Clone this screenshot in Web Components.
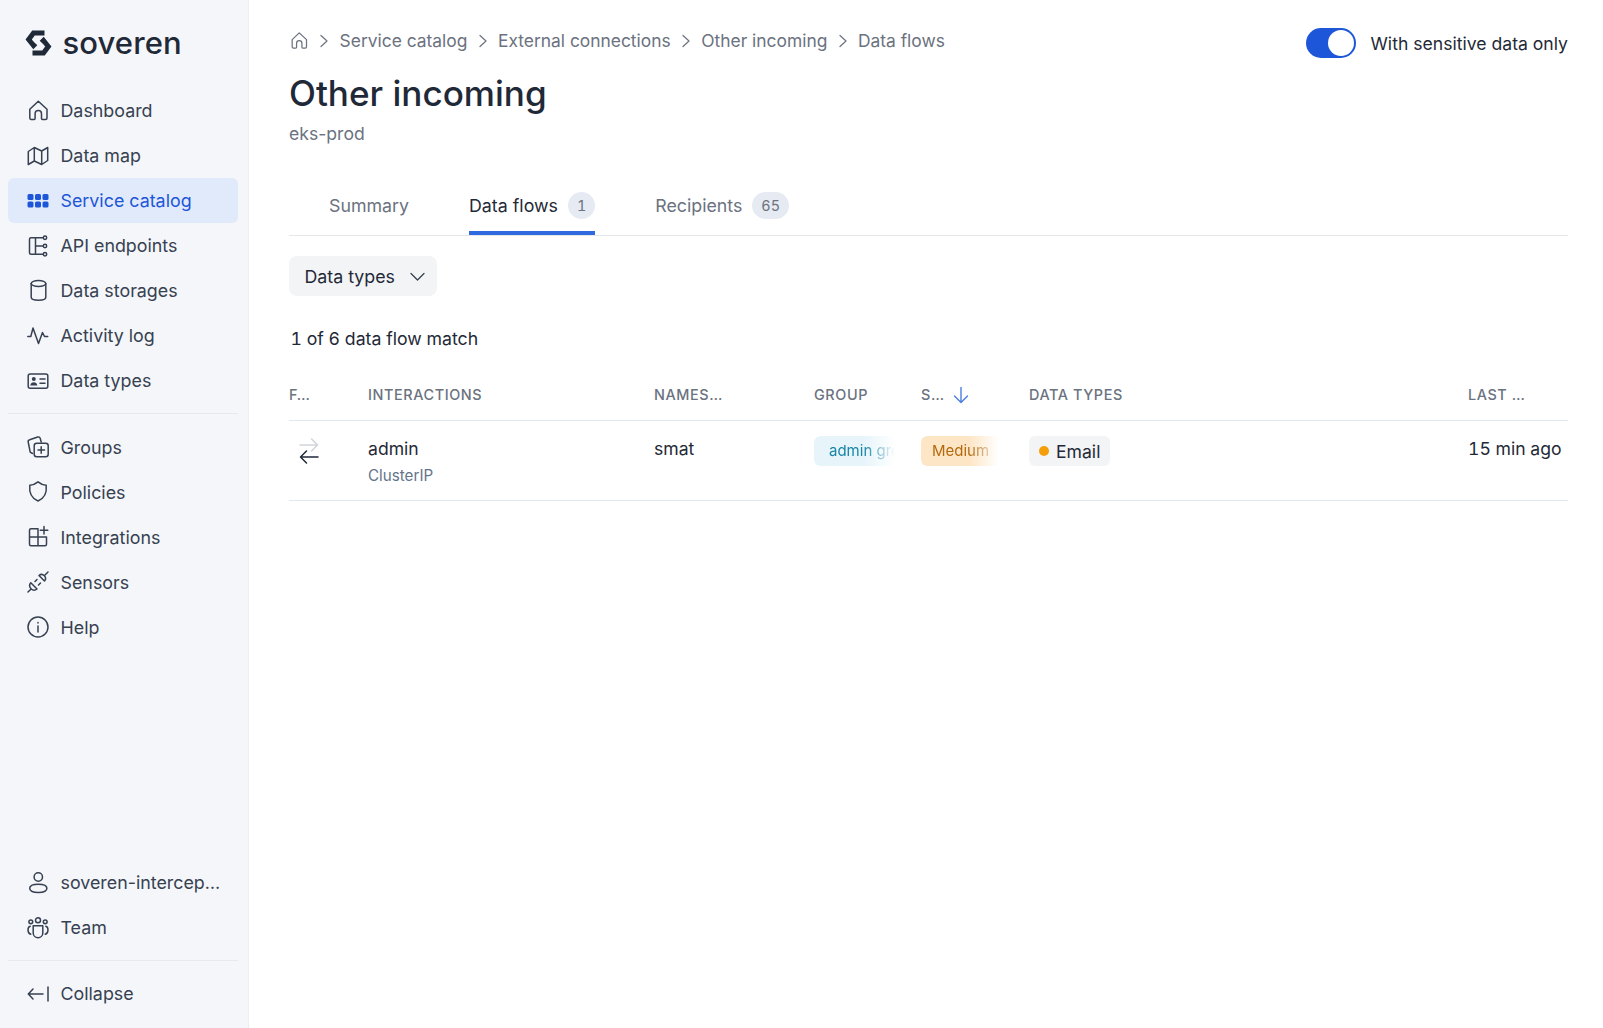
<!DOCTYPE html>
<html lang="en">
<head>
<meta charset="utf-8">
<title>Other incoming</title>
<style>
html,body{margin:0;height:100%;background:#fff;font-family:Inter,"Liberation Sans",sans-serif;color:#1f2937;overflow:hidden}
</style>
</head>
<body>
<app-shell>
  <side-nav slot="nav"></side-nav>
  <page-head>
    <bread-crumbs slot="crumbs"></bread-crumbs>
    <sens-toggle slot="action">With sensitive data only</sens-toggle>
  </page-head>
  <tab-bar></tab-bar>
  <filter-button>Data types</filter-button>
  <flow-table></flow-table>
</app-shell>
<script>
const ICONS={
 home:'<path d="M3.800 19V10.300L12.300 2.200l8.700 8.100V19a1.500 1.500 0 0 1-1.500 1.500h-3a1 1 0 0 1-1-1V14.800a3.200 3.200 0 0 0-6.400 0v4.700a1 1 0 0 1-1 1h-3A1.500 1.500 0 0 1 3.800 19z"/>',
 map:'<path d="M2.300 7.500 8.300 3.500l7.400 3.500 6-3.500v13l-6 4-7.400-3.500-6 3.500zM8.300 3.500v13.500M15.700 7v13.500"/>',
 grid:'<g fill="currentColor" stroke="none"><rect x="1.500" y="5" width="6" height="6" rx="1.500"/><rect x="9" y="5" width="6" height="6" rx="1.500"/><rect x="16.500" y="5" width="6" height="6" rx="1.500"/><rect x="1.500" y="12.500" width="6" height="6" rx="1.500"/><rect x="9" y="12.500" width="6" height="6" rx="1.500"/><rect x="16.500" y="12.500" width="6" height="6" rx="1.500"/></g>',
 api:'<path d="M17 3.800H5A1.500 1.500 0 0 0 3.500 5.300v13.400A1.500 1.500 0 0 0 5 20.200h12M9.500 3.800v16.400M9.500 12h7.500" /><circle cx="19" cy="3.800" r="1.700"/><circle cx="19" cy="12" r="1.700"/><circle cx="19" cy="20.200" r="1.700"/>',
 db:'<ellipse cx="12.500" cy="4.500" rx="7.300" ry="3"/><path d="M5.200 4.500v13.800c0 1.700 3.300 3 7.300 3s7.300-1.300 7.300-3V4.500"/>',
 act:'<path d="M1.800 12.500h3L7 4l5.500 15.500 4-11 2 4h3.200"/>',
 card:'<rect x="2.200" y="5" width="19.600" height="14.300" rx="2"/><circle cx="7.800" cy="10" r="2" fill="currentColor" stroke="none"/><path d="M4.300 16.500c.3-2.200 1.700-3.200 3.500-3.200s3.200 1 3.500 3.200z" fill="currentColor" stroke="none"/><path d="M14 10h5M14 14.300h5"/>',
 groups:'<rect x="8.200" y="8.200" width="14" height="13.500" rx="2.500"/><path d="M15.200 11.700v6.500M12 15h6.500M6.500 18.500 4.200 17.200 2.200 7a2 2 0 0 1 1.500-2.300l8-2.700a2 2 0 0 1 2.500 1.400l1 3.600"/>',
 shield:'<path d="M12 1.900c2.500 2.100 5.200 3.200 8.200 3.300.8 7.500-1.600 13.200-8.200 15.800C5.400 18.400 3 12.700 3.800 5.200c3-.1 5.700-1.200 8.200-3.300z"/>',
 integ:'<path d="M12 3.800H5a1.500 1.500 0 0 0-1.500 1.500v13.900A1.500 1.500 0 0 0 5 20.700h14a1.500 1.500 0 0 0 1.500-1.500V12H3.500M12 3.800v16.900M18 1.500v7.500M14.200 5.200h7.600"/>',
 plug:'<path d="M4.800 12.800 11 19a4.400 4.400 0 0 1-6.200-6.200zM2 22l2.800-2.800M9 11.500l2-2M12.500 15l2-2M13 5.500 18.500 11a3.900 3.900 0 0 0-5.500-5.500zM18.800 5.200 22 2"/>',
 info:'<circle cx="12" cy="12" r="10"/><path d="M12 11v6M12 7.500v.6"/>',
 user:'<circle cx="12.300" cy="6" r="4.200"/><path d="M12.300 13.200c-4.800 0-8.600 1.500-8.600 4.100s3.800 4.200 8.600 4.200 8.600-1.600 8.600-4.200-3.800-4.100-8.600-4.100z"/>',
 team:'<circle cx="12" cy="4.200" r="2.500"/><circle cx="4.800" cy="5.800" r="1.900"/><circle cx="19.200" cy="5.800" r="1.900"/><path d="M7.200 9.800h9.600v7.100a4.800 4.800 0 0 1-9.600 0zM4.200 10.200c-3 .8-3 7.200.6 8M19.800 10.200c3 .8 3 7.200-.6 8"/>',
 collapse:'<path d="M17 12H2.300M7 7 2.300 12 7 17M22 5v14"/>'
};
const icon=(n,s=24,w=1.5)=>`<svg width="${s}" height="${s}" viewBox="0 0 24 24" fill="none" stroke="currentColor" stroke-width="${w}" stroke-linecap="round" stroke-linejoin="round" aria-hidden="true">${ICONS[n]}</svg>`;

class AppShell extends HTMLElement{
 constructor(){super();this.attachShadow({mode:'open'}).innerHTML=`<style>
 :host{display:flex;height:1028px;width:100%}
 main{flex:1;min-width:0;padding:0 35px 0 40px;display:flex;flex-direction:column}
 </style><slot name="nav"></slot><main><slot></slot></main>`}
}
class NavItem extends HTMLElement{
 constructor(){super();this.attachShadow({mode:'open'})}
 connectedCallback(){
  const active=this.hasAttribute('active');
  this.shadowRoot.innerHTML=`<style>
  :host{display:flex;align-items:center;height:45px;padding-left:18.300px;gap:10.200px;border-radius:6px;font-size:17.850px;color:${active?'#1d56d8':'#374151'};background:${active?'#e1eafa':'transparent'};white-space:nowrap}
  svg{flex:none;display:block;color:${active?'#1d56d8':'#374151'}}
  </style>${icon(this.getAttribute('icon'))}<slot></slot>`;
 }
}
class SideNav extends HTMLElement{
 constructor(){super();this.attachShadow({mode:'open'}).innerHTML=`<style>
 :host{display:flex;flex-direction:column;flex:none;box-sizing:border-box;width:249px;height:1028px;background:#f4f6f9;border-right:1px solid #eceef2;padding:0 10px 12px 8px}
 .logo{height:88px;display:flex;align-items:flex-start;padding:30px 0 0 17px;box-sizing:border-box;gap:10.500px;color:#1f2937}
 .logo svg{display:block;flex:none}
 .logo span{font:500 31px/26px Inter,sans-serif;letter-spacing:.1px}
 .sp{flex:1}
 hr{border:0;height:1px;background:#e7e9ee;margin:10px 0;flex:none}
 hr.a{margin-bottom:10.500px}
 </style>
 <div class="logo"><svg width="27" height="26" viewBox="0 0 26 26" fill="none" stroke="currentColor" stroke-width="5" stroke-linejoin="miter"><path d="M19 3H8L3.200 9.500 8 15.500 10 13.500"/><path d="M7 23H18L22.800 16.500 18 10.500 16 12.500"/></svg><span>soveren</span></div>
 <nav-item icon="home">Dashboard</nav-item>
 <nav-item icon="map">Data map</nav-item>
 <nav-item icon="grid" active>Service catalog</nav-item>
 <nav-item icon="api">API endpoints</nav-item>
 <nav-item icon="db">Data storages</nav-item>
 <nav-item icon="act">Activity log</nav-item>
 <nav-item icon="card">Data types</nav-item>
 <hr class="a">
 <nav-item icon="groups">Groups</nav-item>
 <nav-item icon="shield">Policies</nav-item>
 <nav-item icon="integ">Integrations</nav-item>
 <nav-item icon="plug">Sensors</nav-item>
 <nav-item icon="info">Help</nav-item>
 <div class="sp"></div>
 <nav-item icon="user">soveren-intercep…</nav-item>
 <nav-item icon="team">Team</nav-item>
 <hr>
 <nav-item icon="collapse">Collapse</nav-item>`}
}
class PageHead extends HTMLElement{
 constructor(){super();this.attachShadow({mode:'open'}).innerHTML=`<style>
 :host{display:block;flex:none;height:192px;box-sizing:border-box;padding-top:27px}
 .top{display:flex;justify-content:space-between;align-items:flex-start}
 h1{margin:13px 0 0;font:500 35.100px/44px Inter,sans-serif;color:#1f2937}
 p{margin:8px 0 0;font:400 17.600px/22px Inter,sans-serif;color:#6b7280}
 </style><div class="top"><slot name="crumbs"></slot><slot name="action"></slot></div>
 <h1>Other incoming</h1><p>eks-prod</p>`}
}
class BreadCrumbs extends HTMLElement{
 constructor(){super();const sep=`<svg width="10" height="14" viewBox="0 0 10 14" fill="none" stroke="#6b7280" stroke-width="1.200" stroke-linecap="round" stroke-linejoin="round"><path d="M2 1.500 8 7l-6 5.500"/></svg>`;
 this.attachShadow({mode:'open'}).innerHTML=`<style>
 :host{display:flex;align-items:center;gap:10.300px;height:27px;font-size:17.400px;color:#6b7280;white-space:nowrap}
 svg{display:block;flex:none}
 </style><svg width="20" height="20" viewBox="0 0 24 24" fill="none" stroke="#6b7280" stroke-width="1.500" stroke-linejoin="round">${ICONS.home}</svg>${sep}<span>Service catalog</span>${sep}<span>External connections</span>${sep}<span>Other incoming</span>${sep}<span>Data flows</span>`}
}
class SensToggle extends HTMLElement{
 constructor(){super();this.attachShadow({mode:'open'}).innerHTML=`<style>
 :host{display:flex;align-items:center;gap:15px;height:30px;margin-top:1px;font-size:17.600px;color:#1f2937;white-space:nowrap}
 .t{width:50px;height:30px;border-radius:15px;background:#1d56d8;display:flex;justify-content:flex-end;align-items:center;padding-right:2px;box-sizing:border-box;flex:none}
 .k{width:26px;height:26px;border-radius:50%;background:#fff}
 </style><span class="t"><span class="k"></span></span><slot></slot>`}
}
class TabBar extends HTMLElement{
 constructor(){super();this.attachShadow({mode:'open'}).innerHTML=`<style>
 :host{display:flex;flex:none;gap:60px;height:44px;margin-top:-1px;padding-left:40px;border-bottom:1px solid #e5e7eb;font-size:17.800px;color:#6b7280}
 .tab{display:flex;align-items:flex-start;gap:10px;height:44px;padding-top:1px;line-height:27px;box-sizing:border-box;white-space:nowrap}
 .on{color:#1f2937;border-bottom:4px solid #2f6ae0;border-radius:3px 3px 0 0}
 b{font:400 14.400px/27px Inter,sans-serif;min-width:27px;padding:0 9px;box-sizing:border-box;height:27px;border-radius:14px;background:#e6eaf2;color:#6b7280;text-align:center;font-feature-settings:"tnum"}
 </style>
 <div class="tab">Summary</div>
 <div class="tab on">Data flows <b>1</b></div>
 <div class="tab">Recipients <b>65</b></div>`}
}
class FilterButton extends HTMLElement{
 constructor(){super();this.attachShadow({mode:'open'}).innerHTML=`<style>
 :host{display:inline-flex;flex:none;align-self:flex-start;align-items:center;gap:14px;height:40px;margin-top:20px;padding:0 11px 0 15.500px;border-radius:8px;background:#f3f4f6;font-size:17.800px;color:#1f2937}
 svg{display:block}
 </style><slot></slot><svg width="17" height="17" viewBox="0 0 17 17" fill="none" stroke="#374151" stroke-width="1.300" stroke-linecap="round" stroke-linejoin="round"><path d="M2 5.500l6.500 6.500L15 5.500"/></svg>`}
}
class FadeTag extends HTMLElement{
 constructor(){super();this.attachShadow({mode:'open'})}
 connectedCallback(){
  const w=this.getAttribute('w'),bg=this.getAttribute('bg'),c=this.getAttribute('c'),p=this.getAttribute('p')||'15';
  this.shadowRoot.innerHTML=`<style>
  :host{display:block;box-sizing:border-box;width:${w}px;height:30px;line-height:30px;padding-left:${p}px;border-radius:6px;overflow:hidden;white-space:nowrap;font-size:15px;background:${bg};color:${c};
  -webkit-mask-image:linear-gradient(90deg,#000 62%,transparent 100%);mask-image:linear-gradient(90deg,#000 62%,transparent 100%)}
  </style><slot></slot>`}
}
class FlowTable extends HTMLElement{
 constructor(){super();this.attachShadow({mode:'open'}).innerHTML=`<style>
 :host{display:block;flex:none;margin-top:0}
 .count{margin:29px 0 0 1.500px;font-size:17.700px;line-height:27px;color:#1f2937;font-feature-settings:"tnum"}
 .g{display:grid;grid-template-columns:79px 286px 160px 107px 108px 439px 100px}
 .h{height:69px;align-items:center;border-bottom:1px solid #e2e8f0;font-size:14.400px;letter-spacing:.6px;color:#6b7280;font-weight:500;box-sizing:border-box}
 .h>div{padding-top:17px;display:flex;align-items:center;gap:8px;white-space:nowrap}
 .r{height:80px;border-bottom:1px solid #e2e8f0;box-sizing:border-box;font-size:17.600px;color:#1f2937;padding-top:15px}
 .n{line-height:27px;margin-top:-1px}
 .t{font-feature-settings:"tnum"}
 small{display:block;font-size:15.200px;line-height:18px;margin-top:5px;color:#64748b}
 .email{display:inline-flex;align-items:center;gap:7px;height:30px;padding:0 10px;border-radius:6px;background:#f3f4f6}
 .dot{width:10px;height:10px;border-radius:50%;background:#f59e0b}
 svg{display:block}
 .flow{margin:1px 0 0 10px}
 </style>
 <div class="count">1 of 6 data flow match</div>
 <div class="g h"><div>F…</div><div>INTERACTIONS</div><div>NAMES…</div><div>GROUP</div><div>S…<svg width="16" height="18" viewBox="0 0 16 18" fill="none" stroke="#4c7de0" stroke-width="1.400" stroke-linecap="round" stroke-linejoin="round"><path d="M8 1.500v15M1.500 10 8 16.500 14.500 10"/></svg></div><div>DATA TYPES</div><div>LAST …</div></div>
 <div class="g r">
  <div><svg class="flow" width="20" height="28" viewBox="0 0 20 28" fill="none" stroke-width="1.500" stroke-linecap="round" stroke-linejoin="round"><path d="M1 8h17.500M12.500 2 18.500 8 12.500 14" stroke="#d1d5db"/><path d="M19 20H1.500M7.500 14 1.500 20 7.500 26" stroke="#1f2937"/></svg></div>
  <div class="n">admin<small>ClusterIP</small></div>
  <div class="n">smat</div>
  <div><fade-tag w="81" bg="#e7f5fa" c="#1a86a6">admin group</fade-tag></div>
  <div><fade-tag w="78" bg="#fde6c6" c="#b4690e" p="11">Medium</fade-tag></div>
  <div><span class="email"><span class="dot"></span>Email</span></div>
  <div class="n t">15 min ago</div>
 </div>`}
}
customElements.define('app-shell',AppShell);
customElements.define('nav-item',NavItem);
customElements.define('side-nav',SideNav);
customElements.define('page-head',PageHead);
customElements.define('bread-crumbs',BreadCrumbs);
customElements.define('sens-toggle',SensToggle);
customElements.define('tab-bar',TabBar);
customElements.define('filter-button',FilterButton);
customElements.define('fade-tag',FadeTag);
customElements.define('flow-table',FlowTable);
</script>
</body>
</html>
